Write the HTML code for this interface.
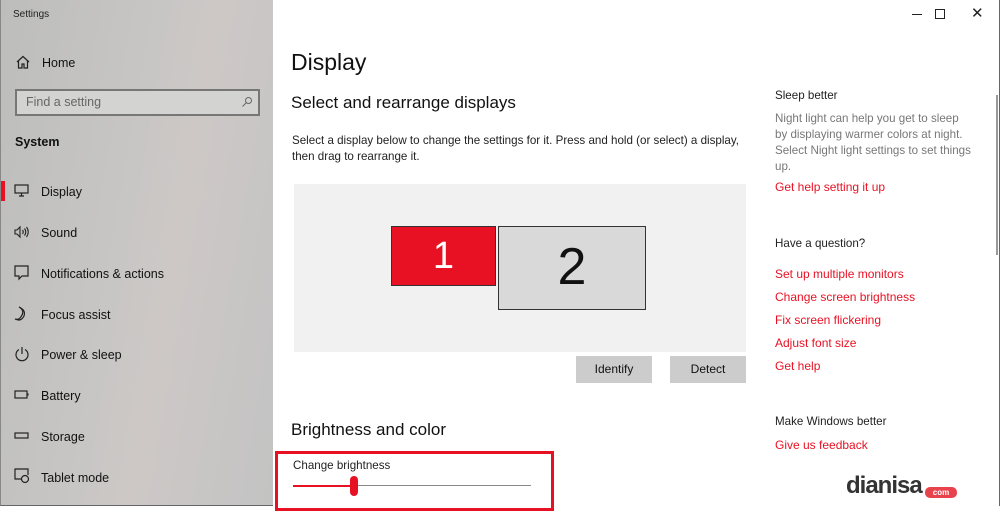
<!DOCTYPE html>
<html><head><style>
*{margin:0;padding:0;box-sizing:border-box}
body{width:1000px;height:506px;overflow:hidden;font-family:"Liberation Sans",sans-serif;background:#fff;position:relative}
.side{position:absolute;left:0;top:0;width:273px;height:506px;background:linear-gradient(100deg,#bdbdbc 0%,#c6c5c4 40%,#cdc8c6 60%,#c3c3c3 100%);border-left:1px solid #888;border-bottom:1px solid #666}
.t{position:absolute;white-space:nowrap}
.nav{font-size:12.5px;color:#111}
.main{font-size:11.6px;color:#222}
.red{color:#e81123;font-size:12px}
.grey{color:#777;font-size:11.6px;line-height:16px}
.btn{position:absolute;background:#ccc;font-size:12px;text-align:center;line-height:27px;color:#111}
svg{position:absolute}
</style></head><body>
<div class="side">
<div class="t" style="left:12px;top:9px;font-size:10px;color:#222">Settings</div>
<svg style="left:15px;top:55px" width="14" height="14" viewBox="0 0 14 14" fill="none" stroke="#222" stroke-width="1.2"><path d="M1 7L7 1.5 13 7M2.5 5.5V13H6V9H8V13H11.5V5.5"/></svg>
<div class="t nav" style="left:41px;top:56px">Home</div>
<div style="position:absolute;left:14px;top:89px;width:245px;height:27px;border:2px solid #777;background:#d3d3d2"></div>
<div class="t" style="left:25px;top:95px;font-size:12.5px;color:#666">Find a setting</div>
<svg style="left:240px;top:96px" width="12" height="12" viewBox="0 0 12 12" fill="none" stroke="#666"><circle cx="7.5" cy="4.5" r="3"/><path d="M5.5 6.5L1.5 10.5"/></svg>
<div class="t" style="left:14px;top:135px;font-size:12.5px;font-weight:bold;color:#111">System</div>
<div style="position:absolute;left:0;top:181px;width:4px;height:20px;background:#e81123"></div>
<svg style="left:13px;top:184px" width="16" height="14" viewBox="0 0 16 14" fill="none" stroke="#222" stroke-width="1.2"><rect x="1" y="1" width="13" height="8"/><path d="M5 12H10M7.5 9V12"/></svg>
<div class="t nav" style="left:40px;top:185px">Display</div>
<svg style="left:13px;top:225px" width="16" height="14" viewBox="0 0 16 14" fill="none" stroke="#222" stroke-width="1.1"><path d="M1 5H3L6 2V12L3 9H1Z M8.5 5Q10 7 8.5 9M10.5 3.5Q13 7 10.5 10.5M12.5 2Q16 7 12.5 12"/></svg>
<div class="t nav" style="left:40px;top:226px">Sound</div>
<svg style="left:13px;top:265px" width="16" height="16" viewBox="0 0 16 16" fill="none" stroke="#222" stroke-width="1.2"><path d="M1 1H14V11H8L5 14V11H1Z"/></svg>
<div class="t nav" style="left:40px;top:267px">Notifications &amp; actions</div>
<svg style="left:13px;top:306px" width="16" height="16" viewBox="0 0 16 16" fill="none" stroke="#222" stroke-width="1.2"><path d="M5 1Q12 5 6 12Q4 14 1 13Q7 16 10 10Q12 4 5 1Z"/></svg>
<div class="t nav" style="left:40px;top:308px">Focus assist</div>
<svg style="left:13px;top:346px" width="16" height="16" viewBox="0 0 16 16" fill="none" stroke="#222" stroke-width="1.2"><path d="M5 3.5A6 6 0 1 0 11 3.5M8 1V8"/></svg>
<div class="t nav" style="left:40px;top:348px">Power &amp; sleep</div>
<svg style="left:13px;top:390px" width="16" height="10" viewBox="0 0 16 10" fill="none" stroke="#222" stroke-width="1.2"><rect x="1" y="1" width="12" height="7"/><path d="M14 3.5V5.5"/></svg>
<div class="t nav" style="left:40px;top:389px">Battery</div>
<svg style="left:13px;top:432px" width="16" height="8" viewBox="0 0 16 8" fill="none" stroke="#222" stroke-width="1.2"><rect x="1" y="1" width="13" height="5"/></svg>
<div class="t nav" style="left:40px;top:430px">Storage</div>
<svg style="left:13px;top:468px" width="16" height="16" viewBox="0 0 16 16" fill="none" stroke="#222" stroke-width="1.2"><path d="M8 11H1V1H14V7"/><circle cx="11" cy="11" r="3.5"/></svg>
<div class="t nav" style="left:40px;top:471px">Tablet mode</div>
</div>

<div class="t" style="left:912px;top:14px;width:10px;height:1px;background:#222"></div>
<div style="position:absolute;left:935px;top:9px;width:10px;height:10px;border:1px solid #222"></div>
<div class="t" style="left:971px;top:4px;font-size:15px;color:#222">✕</div>
<div style="position:absolute;left:996px;top:95px;width:2px;height:160px;background:#999"></div>
<div style="position:absolute;left:999px;top:0;width:1px;height:506px;background:#666"></div>

<div class="t" style="left:291px;top:49px;font-size:23px;color:#111">Display</div>
<div class="t" style="left:291px;top:93px;font-size:17px;color:#111">Select and rearrange displays</div>
<div class="t main" style="left:292px;top:133px;line-height:16px">Select a display below to change the settings for it. Press and hold (or select) a display,<br>then drag to rearrange it.</div>
<div style="position:absolute;left:294px;top:184px;width:452px;height:168px;background:#f1f1f1"></div>
<div style="position:absolute;left:391px;top:226px;width:105px;height:60px;background:#e81123;border:1px solid #333;color:#fff;font-size:38px;text-align:center;line-height:58px;font-weight:300">1</div>
<div style="position:absolute;left:498px;top:226px;width:148px;height:84px;background:#d9d9d9;border:1.5px solid #333;color:#111;font-size:52px;text-align:center;line-height:80px">2</div>
<div class="btn" style="left:576px;top:356px;width:76px">Identify</div>
<div class="btn" style="left:670px;top:356px;width:76px">Detect</div>
<div class="t" style="left:291px;top:420px;font-size:17px;color:#111">Brightness and color</div>
<div style="position:absolute;left:275px;top:451px;width:279px;height:60px;border:3px solid #e81123"></div>
<div class="t main" style="left:293px;top:459px">Change brightness</div>
<div style="position:absolute;left:293px;top:485px;width:60px;height:2px;background:#e81123"></div>
<div style="position:absolute;left:353px;top:485px;width:178px;height:1px;background:#888"></div>
<div style="position:absolute;left:350px;top:476px;width:8px;height:20px;background:#e81123;border-radius:4px"></div>

<div class="t main" style="left:775px;top:89px">Sleep better</div>
<div class="t grey" style="left:775px;top:111px">Night light can help you get to sleep<br>by displaying warmer colors at night.<br>Select Night light settings to set things<br>up.</div>
<div class="t red" style="left:775px;top:180px">Get help setting it up</div>
<div class="t main" style="left:775px;top:237px">Have a question?</div>
<div class="t red" style="left:775px;top:267px">Set up multiple monitors</div>
<div class="t red" style="left:775px;top:290px">Change screen brightness</div>
<div class="t red" style="left:775px;top:313px">Fix screen flickering</div>
<div class="t red" style="left:775px;top:336px">Adjust font size</div>
<div class="t red" style="left:775px;top:359px">Get help</div>
<div class="t main" style="left:775px;top:415px">Make Windows better</div>
<div class="t red" style="left:775px;top:438px">Give us feedback</div>
<div class="t" style="left:846px;top:472px;font-size:24px;font-weight:bold;color:#333;letter-spacing:-1px">dianisa</div>
<div style="position:absolute;left:925px;top:487px;width:32px;height:11px;background:#e8434c;border-radius:5px;color:#fff;font-size:8px;line-height:11px;text-align:center;font-weight:bold">com</div>
</body></html>
